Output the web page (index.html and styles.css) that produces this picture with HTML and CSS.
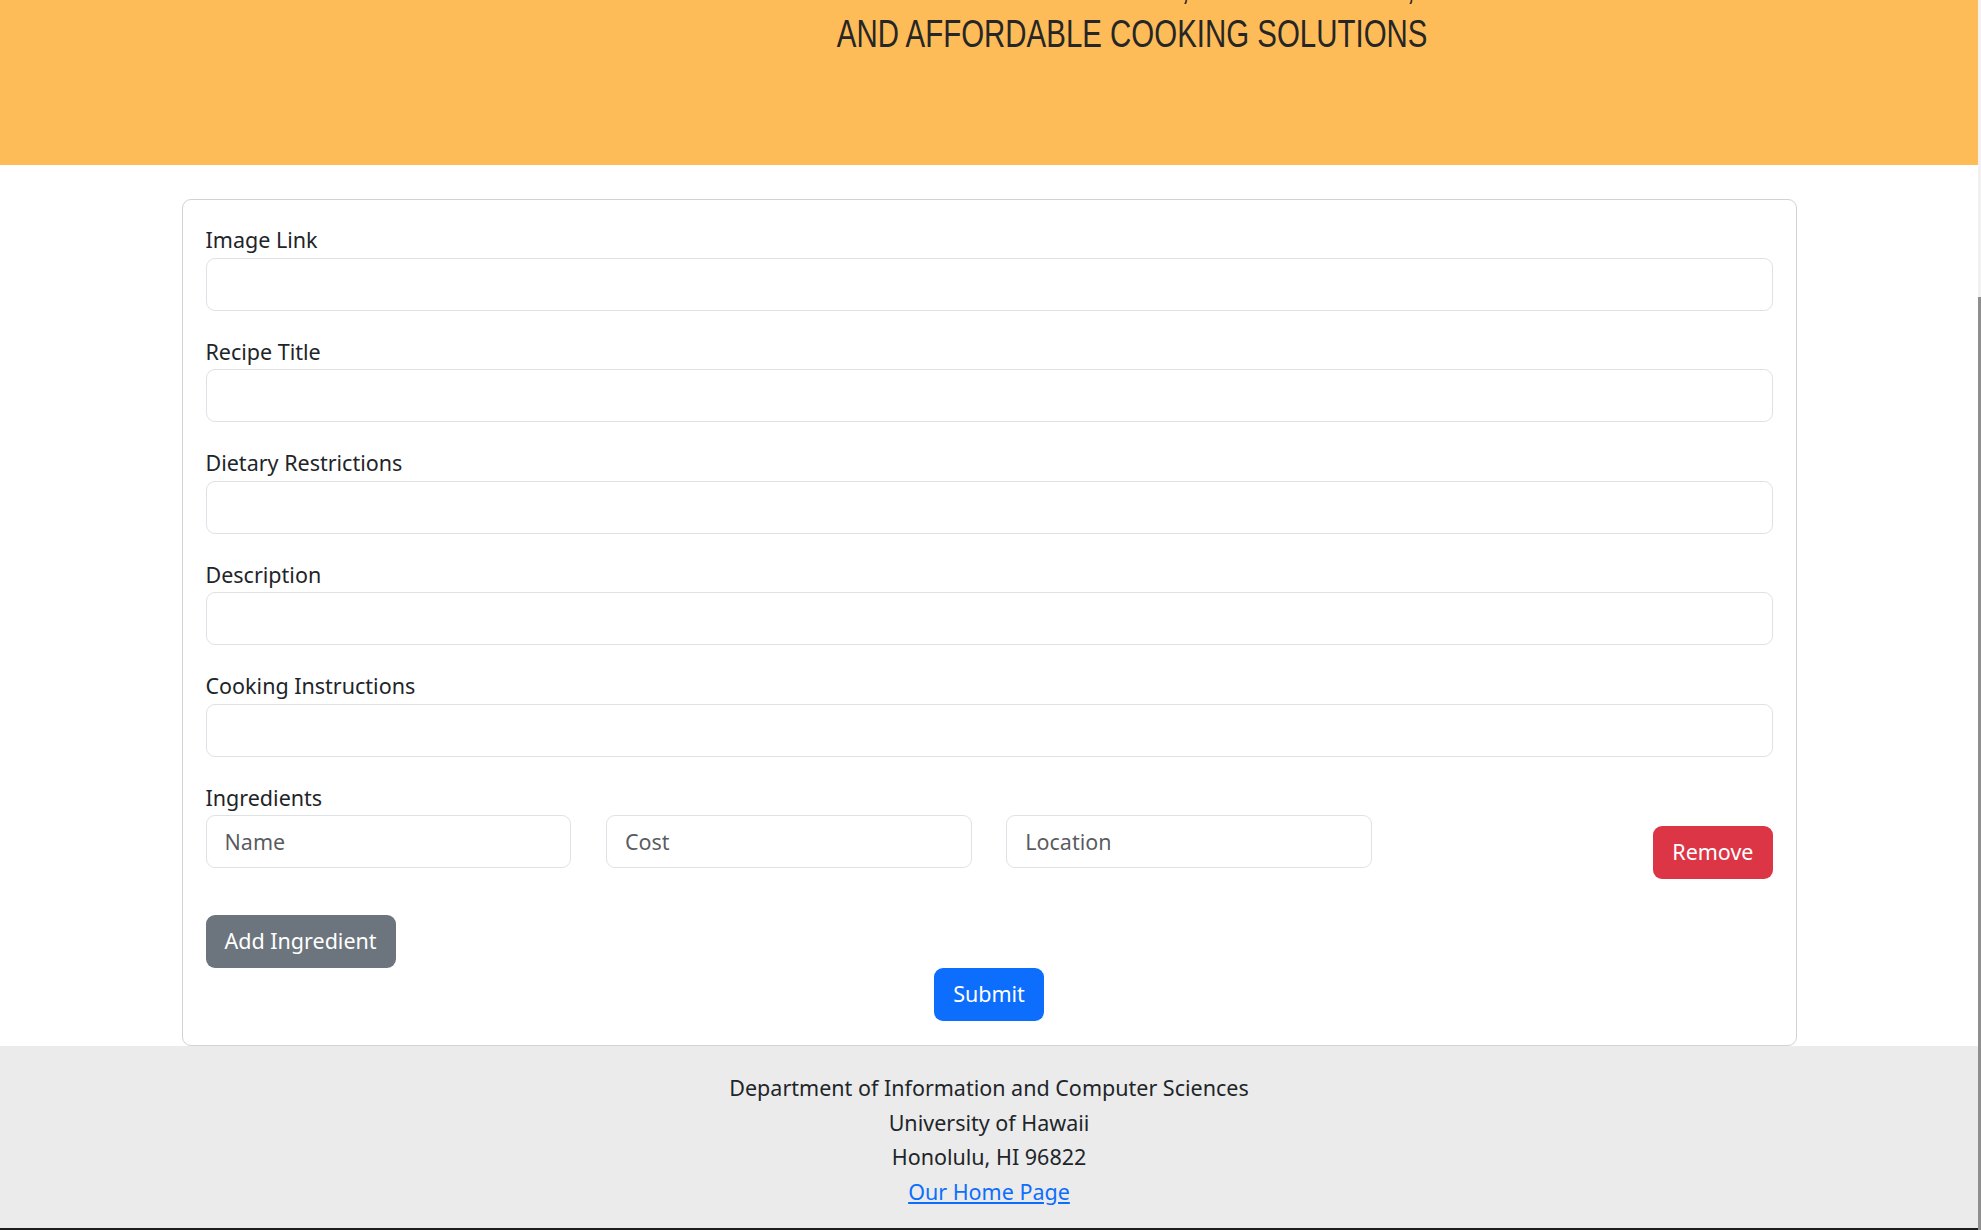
FILE: index.html
```html
<!DOCTYPE html>
<html lang="en">
<head>
<meta charset="utf-8">
<title>Add Recipe</title>
<link rel="stylesheet" href="styles.css">
</head>
<body>
<div class="scrollbar"><div class="scrollbar-thumb"></div></div>
<header class="site-header">
  <div class="header-inner">
    <h1 class="tagline">
      <span class="tagline-text">PROVIDING DELICIOUS, CHEAP MEALS,<br>AND AFFORDABLE COOKING SOLUTIONS</span>
    </h1>
  </div>
</header>

<main class="form-card">
  <form class="recipe-form">
    <div class="field">
      <label class="field-label">Image Link</label>
      <input class="text-input" type="text">
    </div>
    <div class="field">
      <label class="field-label">Recipe Title</label>
      <input class="text-input" type="text">
    </div>
    <div class="field">
      <label class="field-label">Dietary Restrictions</label>
      <input class="text-input" type="text">
    </div>
    <div class="field">
      <label class="field-label">Description</label>
      <input class="text-input" type="text">
    </div>
    <div class="field">
      <label class="field-label">Cooking Instructions</label>
      <input class="text-input" type="text">
    </div>
    <div class="ingredients">
      <label class="field-label">Ingredients</label>
      <div class="ingredient-row">
        <input class="text-input" type="text" placeholder="Name">
        <input class="text-input" type="text" placeholder="Cost">
        <input class="text-input" type="text" placeholder="Location">
        <div class="remove-cell"><button type="button" class="btn btn-danger">Remove</button></div>
      </div>
    </div>
    <div class="add-row">
      <button type="button" class="btn btn-secondary">Add Ingredient</button>
    </div>
    <div class="submit-row">
      <button type="submit" class="btn btn-primary">Submit</button>
    </div>
  </form>
</main>

<footer class="site-footer">
  <div>Department of Information and Computer Sciences</div>
  <div>University of Hawaii</div>
  <div>Honolulu, HI 96822</div>
  <div><a class="footer-link" href="#">Our Home Page</a></div>
</footer>
</body>
</html>
```

FILE: styles.css
```css
html, body {
  margin: 0;
  padding: 0;
}

html {
  overflow: hidden;
}

body {
  margin-right: 3px;
  font-family: "Noto Sans", "Open Sans", sans-serif;
  font-size: 21.5px;
  line-height: 34.5px;
  color: #212529;
  background: #ffffff;
}

.scrollbar {
  position: fixed;
  top: 0;
  right: 0;
  width: 3px;
  height: 100%;
  background: #f1f1f1;
}

.scrollbar-thumb {
  margin-top: 297px;
  height: calc(100% - 297px);
  background: #8f8f8f;
}

.site-header {
  background: #febc59;
  height: 165px;
  overflow: hidden;
}

.header-inner {
  padding-left: 286px;
  text-align: center;
}

.tagline {
  margin: -38px 0 0;
  font-family: "Liberation Sans", Arial, sans-serif;
  font-weight: 400;
  font-size: 39px;
  line-height: 48px;
  color: #262626;
  white-space: nowrap;
}

.tagline-text {
  display: inline-block;
  transform: scaleX(0.755);
  transform-origin: center top;
}

.form-card {
  display: block;
  width: 1615px;
  box-sizing: border-box;
  margin: 34px auto 0;
  border: 1px solid #d2d2d2;
  border-radius: 9px;
  padding: 23px 23px 24px;
}

.recipe-form {
  margin: 0;
}

.field {
  margin-bottom: 24px;
}

.field-label {
  display: block;
}

.text-input {
  display: block;
  width: 100%;
  box-sizing: border-box;
  height: 53px;
  margin: 0;
  border: 1px solid #dee2e6;
  border-radius: 9px;
  padding: 0 18px;
  font: inherit;
  color: #212529;
  background: #ffffff;
}

.text-input::placeholder {
  color: rgba(33, 37, 41, 0.75);
}

.ingredient-row {
  display: grid;
  grid-template-columns: repeat(4, 1fr);
  column-gap: 34.5px;
  align-items: start;
}

.remove-cell {
  display: flex;
  justify-content: flex-end;
  padding-top: 11px;
}

.btn {
  height: 53px;
  box-sizing: border-box;
  margin: 0;
  border: 1px solid transparent;
  border-radius: 9px;
  padding: 0 18px;
  font: inherit;
  color: #ffffff;
  cursor: pointer;
}

.btn-danger {
  background: #dc3545;
}

.btn-secondary {
  background: #6c757d;
}

.btn-primary {
  background: #0d6efd;
}

.add-row {
  margin-top: 36px;
}

.submit-row {
  display: flex;
  justify-content: center;
}

.site-footer {
  background: #ebebeb;
  padding: 25px 0 19px;
  text-align: center;
  border-bottom: 2px solid #1c1c1c;
}

.footer-link {
  color: #0d6efd;
  text-decoration: underline;
}
```
